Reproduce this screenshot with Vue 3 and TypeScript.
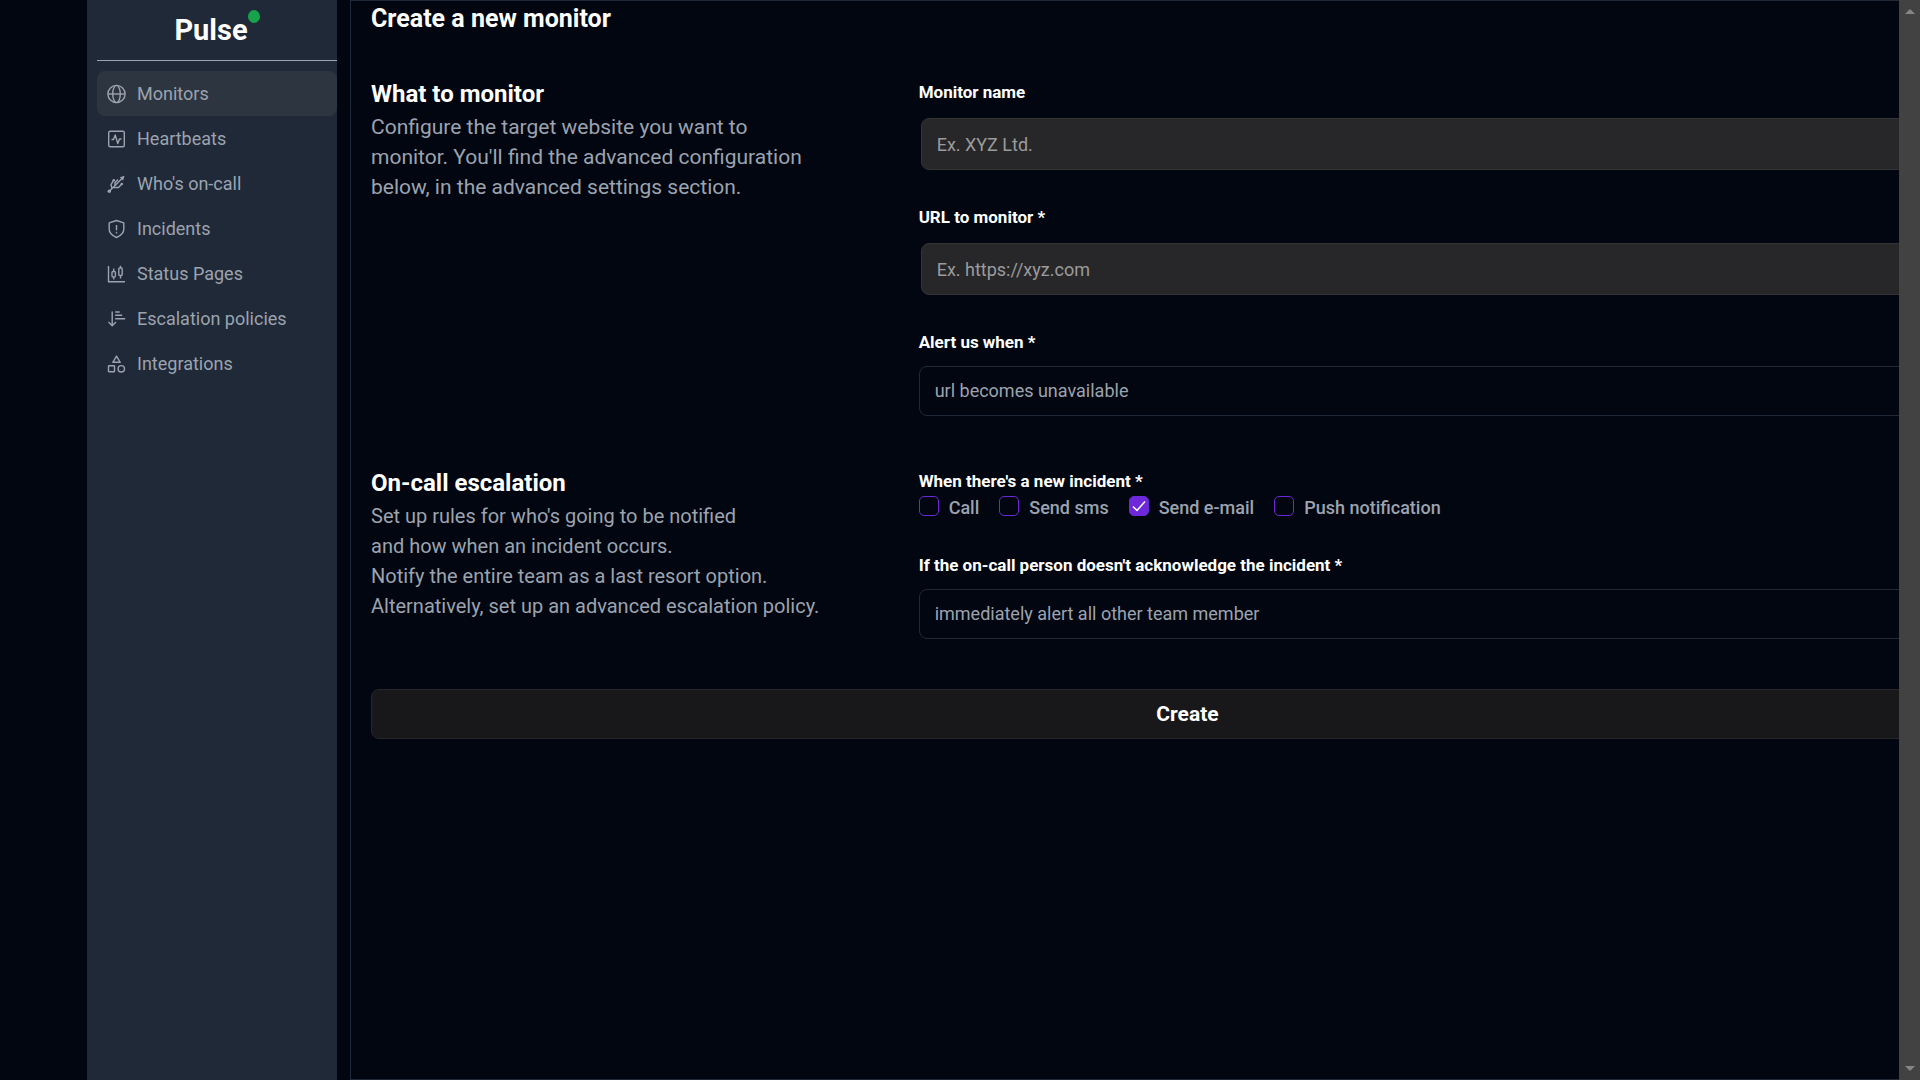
<script setup lang="ts">
import { ref } from 'vue'

interface NavItem {
  label: string
  icon: string
}

const navItems: NavItem[] = [
  { label: 'Monitors', icon: 'globe' },
  { label: 'Heartbeats', icon: 'heartbeat' },
  { label: "Who's on-call", icon: 'oncall' },
  { label: 'Incidents', icon: 'shield' },
  { label: 'Status Pages', icon: 'candles' },
  { label: 'Escalation policies', icon: 'sort' },
  { label: 'Integrations', icon: 'shapes' },
]

const active = ref('Monitors')
const monitorName = ref('')
const url = ref('')
const condition = ref('url becomes unavailable')
const fallback = ref('immediately alert all other team member')

const channels = ref([
  { label: 'Call', checked: false },
  { label: 'Send sms', checked: false },
  { label: 'Send e-mail', checked: true },
  { label: 'Push notification', checked: false },
])
</script>

<template>
  <div class="page">
    <div class="viewport">
      <aside class="sidebar">
        <div class="brand">
          <span class="brand-name">Pulse<i class="brand-dot"></i></span>
        </div>
        <nav class="nav">
          <a
            v-for="item in navItems"
            :key="item.label"
            href="#"
            class="nav-link"
            :class="{ active: active === item.label }"
            @click.prevent="active = item.label"
          >
            <svg class="icon" viewBox="0 0 20 20" aria-hidden="true">
              <template v-if="item.icon === 'globe'">
                <circle cx="9.500" cy="10" r="8.600" />
                <ellipse cx="9.500" cy="10" rx="3.800" ry="8.600" />
                <path d="M1 10h17" />
              </template>
              <template v-else-if="item.icon === 'heartbeat'">
                <rect x="1.700" y="2.200" width="15.600" height="15.600" rx="1.500" />
                <path d="M4.500 10.500h2L8.200 6l2.600 8.500 1.700-4.500h2" />
              </template>
              <template v-else-if="item.icon === 'oncall'">
                <path d="M2.300 17.200L16 3.500" />
                <path d="M5 14.300l-1-3.600L6.700 6.300" />
                <path d="M8 11.500V8.700l3-3.200" />
                <path d="M6.200 13.500h5.300L15 9.800" />
                <path class="solid" d="M12.800 3.200l4.800-1.500-1.500 4.800z" />
                <circle class="solid" cx="2.300" cy="17.200" r="1.700" />
                <circle class="solid" cx="6.800" cy="6.200" r="1.300" />
                <circle class="solid" cx="14.800" cy="10" r="1.300" />
              </template>
              <template v-else-if="item.icon === 'shield'">
                <path d="M9.500 1.500l7.300 2.300v6.400c0 3.700-2.800 6.300-7.300 8.300-4.500-2-7.300-4.600-7.300-8.300V3.800z" />
                <path d="M9.500 6v5.200M9.500 12.800v1.700" />
              </template>
              <template v-else-if="item.icon === 'candles'">
                <path d="M1.500 2v15.700h16.500" />
                <rect x="5" y="7.500" width="3.400" height="5.500" rx="1" />
                <path d="M6.700 4.500v3M6.700 13v2.500" />
                <rect x="11.800" y="4" width="3.400" height="7.500" rx="1" />
                <path d="M13.500 1.800v2.200M13.500 11.500v3" />
              </template>
              <template v-else-if="item.icon === 'sort'">
                <path d="M5.200 2.500v14M1.500 13l3.700 3.700L9 13" />
                <path d="M8.200 3h4.500M8.200 6.300h7M8.200 9.800h10" />
              </template>
              <template v-else>
                <path d="M9.500 2.200l3.700 6.100H5.800z" />
                <rect x="1.500" y="11.800" width="6" height="6" rx="0.600" />
                <circle cx="14.300" cy="14.800" r="3.200" />
              </template>
            </svg>
            <span>{{ item.label }}</span>
          </a>
        </nav>
      </aside>

      <main class="content">
        <h1 class="heading title">Create a new monitor</h1>
        <form class="form" @submit.prevent>
          <section class="section">
            <div class="intro">
              <h2 class="heading">What to monitor</h2>
              <p class="large">
                Configure the target website you want to<br />
                monitor. You'll find the advanced configuration<br />
                below, in the advanced settings section.
              </p>
            </div>
            <div class="fields">
              <div class="field">
                <label for="name">Monitor name</label>
                <input id="name" v-model="monitorName" class="text-input" type="text" placeholder="Ex. XYZ Ltd." />
              </div>
              <div class="field">
                <label for="url">URL to monitor *</label>
                <input id="url" v-model="url" class="text-input" type="text" placeholder="Ex. https://xyz.com" />
              </div>
              <div class="field">
                <label for="condition">Alert us when *</label>
                <select id="condition" v-model="condition" class="select">
                  <option>url becomes unavailable</option>
                </select>
              </div>
            </div>
          </section>

          <section class="section">
            <div class="intro">
              <h2 class="heading">On-call escalation</h2>
              <p>
                Set up rules for who's going to be notified<br />
                and how when an incident occurs.<br />
                Notify the entire team as a last resort option.<br />
                Alternatively, set up an advanced escalation policy.
              </p>
            </div>
            <div class="fields">
              <fieldset class="channels">
                <legend>When there's a new incident *</legend>
                <div class="channel-row">
                  <label v-for="channel in channels" :key="channel.label" class="channel">
                    <span class="box">
                      <input v-model="channel.checked" type="checkbox" />
                      <svg v-if="channel.checked" class="tick" viewBox="0 0 20 20" aria-hidden="true">
                        <path d="M4 10.500l4 4 8-9" />
                      </svg>
                    </span>
                    <span>{{ channel.label }}</span>
                  </label>
                </div>
              </fieldset>
              <div class="field">
                <label for="fallback">If the on-call person doesn't acknowledge the incident *</label>
                <select id="fallback" v-model="fallback" class="select">
                  <option>immediately alert all other team member</option>
                </select>
              </div>
            </div>
          </section>

          <button type="submit" class="create">Create</button>
        </form>
      </main>
    </div>

    <div class="scrollbar" aria-hidden="true">
      <svg viewBox="0 0 10 5"><path d="M0 5L5 0l5 5z" /></svg>
      <svg viewBox="0 0 10 5"><path d="M0 0l5 5 5-5z" /></svg>
    </div>
  </div>
</template>

<style>
body {
  background: #020610;
}
</style>

<style scoped>
* {
  box-sizing: border-box;
}

.page {
  display: flex;
  height: 100vh;
  overflow: hidden;
  background: #020610;
  color: #9ca3af;
  font-family: Roboto, "Noto Sans", sans-serif;
  font-size: 18px;
  line-height: 30px;
}

.viewport {
  display: flex;
  flex: 1;
  gap: 13px;
  min-width: 0;
  padding-left: 87px;
  overflow: hidden;
}

.sidebar {
  flex: 0 0 250px;
  padding-left: 10px;
  background: #1f2937;
}

.brand {
  display: flex;
  justify-content: center;
  height: 61px;
  padding-right: 12px;
  border-bottom: 1px solid #9ca3af;
}

.brand-name {
  position: relative;
  color: #fff;
  font-size: 29px;
  font-weight: 700;
  line-height: 60px;
}

.brand-dot {
  position: absolute;
  top: 10px;
  left: 100%;
  width: 12px;
  height: 13px;
  border-radius: 50%;
  background: #16a34a;
}

.nav {
  display: flex;
  flex-direction: column;
  padding-top: 10px;
}

.nav-link {
  display: flex;
  align-items: center;
  gap: 10px;
  height: 45px;
  padding: 0 10px;
  border-radius: 8px;
  color: #9ca3af;
  text-decoration: none;
}

.nav-link.active {
  background: #2d3640;
}

.icon {
  width: 20px;
  height: 20px;
  fill: none;
  stroke: currentColor;
  stroke-width: 1.4;
  stroke-linejoin: round;
}

.solid {
  fill: currentColor;
  stroke: none;
}

.content {
  flex: none;
  width: calc(100vw - 245px);
  padding: 2px 20px;
  border: 1px solid #1f2937;
}

.heading {
  margin: 0;
  color: #fff;
  font-size: 24px;
  font-weight: 700;
  line-height: 32px;
}

.title {
  margin-bottom: 42px;
  font-size: 25px;
}

.form {
  display: flex;
  flex-direction: column;
  gap: 50px;
}

.section {
  display: grid;
  grid-template-columns: repeat(3, 1fr);
  gap: 10px;
}

.intro {
  padding-top: 1px;
}

.intro p {
  margin: 2px 0 0;
  font-size: 20px;
}

.intro .large {
  font-size: 21px;
}

.fields {
  display: flex;
  flex-direction: column;
  grid-column: span 2;
  gap: 30px;
}

.field {
  display: flex;
  flex-direction: column;
  gap: 9px;
}

.field label,
legend {
  padding: 0;
  color: #fff;
  font-size: 17px;
  font-weight: 700;
}

.text-input,
.select {
  padding: 0 15px;
  border-radius: 8px;
  font: inherit;
  outline: none;
}

.text-input {
  height: 52px;
  margin: 2px;
  border: 1px solid #333336;
  background: #272729;
  color: #fff;
}

.text-input::placeholder {
  color: #9b9b9b;
  opacity: 1;
}

.select {
  height: 50px;
  border: 1px solid #1f2937;
  background: transparent;
  color: #9ca3af;
  appearance: none;
}

.channels {
  margin: 0;
  padding: 0;
  border: 0;
}

.channel-row {
  display: flex;
  gap: 20px;
  height: 24px;
}

.channel {
  display: flex;
  gap: 10px;
  font-weight: 500;
  line-height: 24px;
}

.box {
  position: relative;
  width: 20px;
  height: 20px;
}

.box input {
  display: block;
  width: 20px;
  height: 20px;
  margin: 0;
  border: 1px solid #6d28d9;
  border-radius: 5px;
  appearance: none;
}

.box input:checked {
  background: #6d28d9;
}

.tick {
  position: absolute;
  inset: 0;
  fill: none;
  stroke: #fff;
  stroke-width: 1.5;
  pointer-events: none;
}

.create {
  height: 50px;
  border: 1px solid #27272a;
  border-radius: 8px;
  background: #18181a;
  color: #fff;
  font: inherit;
  font-size: 21px;
  font-weight: 700;
}

.scrollbar {
  display: flex;
  flex: 0 0 21px;
  flex-direction: column;
  align-items: center;
  justify-content: space-between;
  padding: 9px 0;
  background: #424242;
}

.scrollbar svg {
  width: 10px;
  height: 5px;
  fill: #858585;
}
</style>
